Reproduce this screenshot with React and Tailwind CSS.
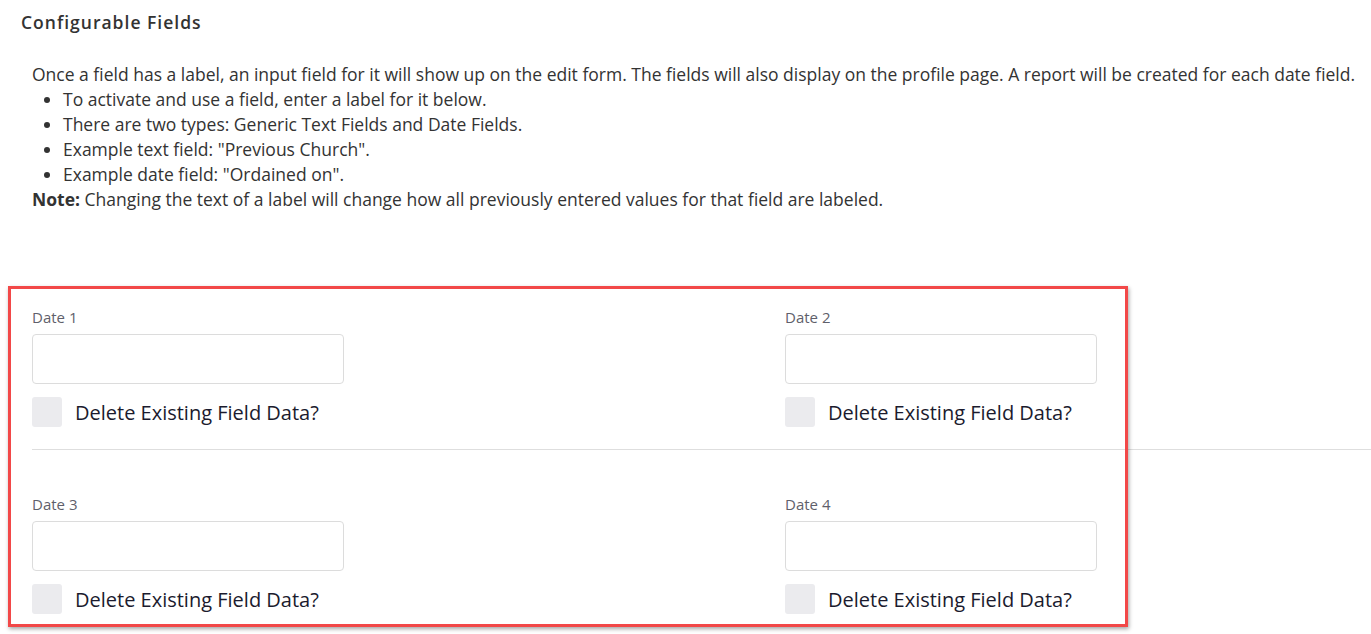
import React from 'react';

function Field({ label }) {
  return (
    <div className="flex flex-col">
      <label className="text-[15px] font-medium text-[#5f5f6b] leading-[18px] mb-[8px]">{label}</label>
      <input type="text" className="w-[312px] h-[50px] border border-[#dcdcdc] rounded-[4px] bg-white outline-none" />
      <div className="flex items-center mt-[13px]">
        <span className="w-[30px] h-[30px] rounded-[3px] bg-[#ebebee] shrink-0" />
        <span className="ml-[13px] translate-y-[1px] text-[20px] leading-[30px] text-[#1b1b2e]">Delete Existing Field Data?</span>
      </div>
    </div>
  );
}

export default function App() {
  return (
    <div className="relative w-[1371px] h-[634px] overflow-hidden bg-white font-['Open_Sans',sans-serif] text-[#333]">
      <h2 className="pt-[10px] pl-[21px] text-[17.5px] leading-[24px] font-semibold tracking-[1px] text-[#333]">
        Configurable Fields
      </h2>
      <div className="pl-[32px] pt-[28px] text-[17.5px] leading-[25px] text-[#333]">
        <p>Once a field has a label, an input field for it will show up on the edit form. The fields will also display on the profile page. A report will be created for each date field.</p>
        <ul className="list-disc pl-[31px]">
          <li>To activate and use a field, enter a label for it below.</li>
          <li>There are two types: Generic Text Fields and Date Fields.</li>
          <li>Example text field: "Previous Church".</li>
          <li>Example date field: "Ordained on".</li>
        </ul>
        <p><span className="font-bold">Note:</span> Changing the text of a label will change how all previously entered values for that field are labeled.</p>
      </div>

      <div className="pl-[32px] mt-[96px]">
        <div className="grid grid-cols-[753px_1fr]">
          <Field label="Date 1" />
          <Field label="Date 2" />
        </div>
        <div className="border-t border-[#dedede] mt-[22px] mb-[45px]" />
        <div className="grid grid-cols-[753px_1fr]">
          <Field label="Date 3" />
          <Field label="Date 4" />
        </div>
      </div>

      <div className="absolute left-[8px] top-[286px] w-[1120px] h-[341px] border-[3px] border-[#f24848] shadow-[1px_2px_4px_rgba(0,0,0,0.35)] pointer-events-none" />
    </div>
  );
}
